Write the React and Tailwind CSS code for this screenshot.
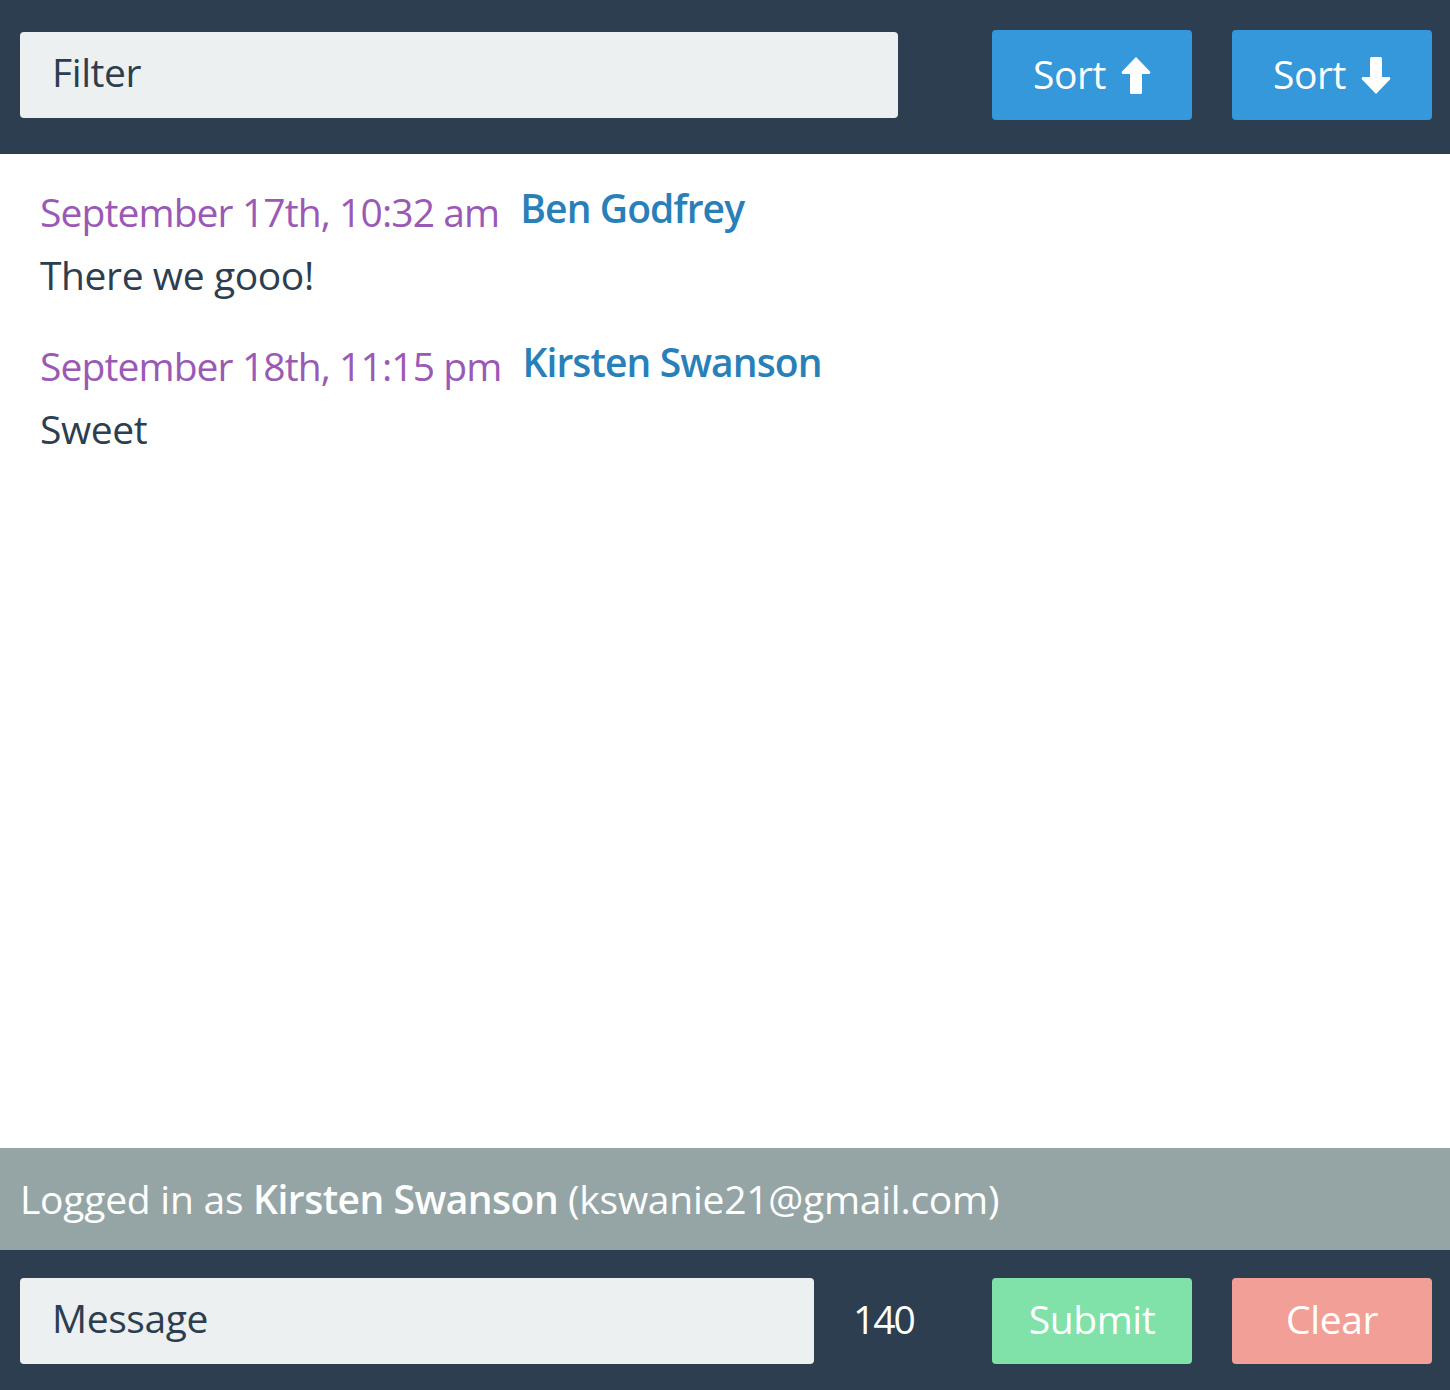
import React from "react";

function ArrowUp() {
  return (
    <svg width="30" height="37" viewBox="0 0 30 37" className="block">
      <path d="M15 0 L29 14.5 Q30 16 28.5 17 L21 17 L21 35.5 Q21 37 19.5 37 L10.5 37 Q9 37 9 35.5 L9 17 L1.5 17 Q0 16 1 14.5 Z" fill="#ffffff" />
    </svg>
  );
}

function ArrowDown() {
  return (
    <svg width="30" height="37" viewBox="0 0 30 37" className="block">
      <path d="M15 37 L29 22.5 Q30 21 28.5 20 L21 20 L21 1.5 Q21 0 19.5 0 L10.5 0 Q9 0 9 1.5 L9 20 L1.5 20 Q0 21 1 22.5 Z" fill="#ffffff" />
    </svg>
  );
}

const messages = [
  { date: "September 17th, 10:32 am", name: "Ben Godfrey", text: "There we gooo!" },
  { date: "September 18th, 11:15 pm", name: "Kirsten Swanson", text: "Sweet" },
];

export default function App() {
  return (
    <div className="flex flex-col h-[1390px] w-[1450px] bg-white font-['Open_Sans',sans-serif] text-[39px] tracking-[-0.4px]">
      <div className="h-[154px] shrink-0 bg-[#2d3e50] flex items-center pb-[4px] pl-[20px] pr-[18px]">
        <input
          placeholder="Filter"
          className="shrink-0 w-[878px] h-[86px] rounded-[4px] bg-[#ecf0f1] pl-[32px] pb-[8px] text-[39px] tracking-[-0.4px] text-[#2c3e50] placeholder:text-[#2c3e50] outline-none"
        />
        <button className="shrink-0 ml-[94px] w-[200px] h-[90px] rounded-[4px] bg-[#3498db] text-white flex items-center justify-center gap-[15px]">
          <span className="leading-none -mt-[4px]">Sort</span>
          <ArrowUp />
        </button>
        <button className="shrink-0 ml-[40px] w-[200px] h-[90px] rounded-[4px] bg-[#3498db] text-white flex items-center justify-center gap-[15px]">
          <span className="leading-none -mt-[4px]">Sort</span>
          <ArrowDown />
        </button>
      </div>

      <div className="flex-1 px-[40px] pt-[28px] flex flex-col gap-[31px]">
        {messages.map((m, i) => (
          <div key={i} className="flex flex-col">
            <div className="flex items-start gap-[21px]">
              <span className="leading-[60px] text-[#9b59b6] tracking-[-0.9px]">{m.date}</span>
              <span className="leading-[52px] text-[#2980b9] font-semibold tracking-[-0.9px]">{m.name}</span>
            </div>
            <div className="mt-[3px] leading-[60px] text-[#2c3e50]">{m.text}</div>
          </div>
        ))}
      </div>

      <div className="h-[102px] shrink-0 bg-[#95a5a6] flex items-center px-[20px] text-white tracking-[-0.25px]">
        <span>
          Logged in as <span className="font-semibold tracking-[-0.5px]">Kirsten Swanson</span> (kswanie21@gmail.com)
        </span>
      </div>

      <div className="h-[140px] shrink-0 bg-[#2d3e50] flex items-center pl-[20px] pr-[18px] pt-[2px]">
        <input
          placeholder="Message"
          className="shrink-0 w-[794px] h-[86px] rounded-[4px] bg-[#ecf0f1] pl-[32px] pb-[8px] text-[39px] tracking-[-0.4px] text-[#2c3e50] placeholder:text-[#2c3e50] outline-none"
        />
        <div className="shrink-0 w-[178px] pl-[39px] pb-[4px] text-white tracking-[-2px]">140</div>
        <button className="shrink-0 w-[200px] h-[86px] rounded-[4px] bg-[#80e1a9] text-white pb-[4px]">Submit</button>
        <button className="shrink-0 ml-[40px] w-[200px] h-[86px] rounded-[4px] bg-[#f2a097] text-white pb-[4px]">Clear</button>
      </div>
    </div>
  );
}
